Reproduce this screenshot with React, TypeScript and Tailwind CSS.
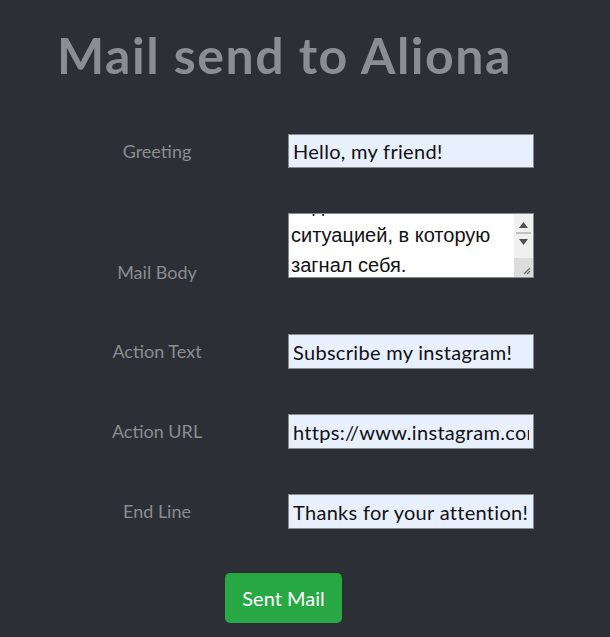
import React, { useEffect, useRef } from 'react';

const fields = [
  { label: 'Action Text', value: 'Subscribe my instagram!' },
  { label: 'Action URL', value: 'https://www.instagram.com/aliona' },
  { label: 'End Line', value: 'Thanks for your attention!' },
];

const font = { fontFamily: 'Lato, "Open Sans", sans-serif' };

const mailBody = 'Привет!\nВ данном письме хочу\nподелиться своей\nситуацией, в которую\nзагнал себя.';

const App: React.FC = () => {
  const bodyRef = useRef<HTMLTextAreaElement>(null);

  useEffect(() => {
    const el = bodyRef.current;
    if (el) el.scrollTop = el.scrollHeight - el.clientHeight - 5;
  }, []);

  return (
    <div className="min-h-[637px] w-full bg-[#2c2f35]" style={font}>
      <h1 className="pl-[57px] pt-[20px] text-[50px] font-bold leading-[70px] tracking-[1.5px] text-[#8b8d92]">
        Mail send to Aliona
      </h1>

      <div className="mt-[44px] flex flex-col">
        <div className="flex items-center">
          <label className="ml-[57px] w-[200px] text-center text-[18px] text-[#8a8d91]">Greeting</label>
          <input
            className="ml-[31px] h-[34px] w-[246px] border border-[#8a8a8a] bg-[#e8f0fe] px-[4px] text-[20px] tracking-[0.3px] text-[#111] outline-none"
            defaultValue="Hello, my friend!"
          />
        </div>

        <div className="mt-[45px] flex items-end">
          <label className="mb-[-8px] ml-[57px] w-[200px] text-center text-[18px] text-[#8a8d91]">Mail Body</label>
          <div className="ml-[31px] flex h-[65px] w-[246px] border border-[#8a8a8a] bg-white">
            <textarea
              ref={bodyRef}
              className="h-full flex-1 resize-none overflow-hidden bg-white px-[2px] py-[2px] text-[20px] leading-[30px] text-[#111] outline-none"
              style={{ fontFamily: '"Liberation Sans", Arial, sans-serif' }}
              defaultValue={mailBody}
            />
            <div className="flex w-[19px] flex-col bg-[#f0f0f0]">
              <div className="flex h-[44px] flex-col items-center pt-[8px]">
                <svg width="9" height="6" viewBox="0 0 9 6">
                  <path d="M4.5 0 L9 6 L0 6 Z" fill="#505050" />
                </svg>
                <div className="mt-[4px] h-[2px] w-[15px] bg-[#c1c1c1]" />
                <svg className="mt-[5px]" width="9" height="6" viewBox="0 0 9 6">
                  <path d="M0 0 L9 0 L4.5 6 Z" fill="#505050" />
                </svg>
              </div>
              <div className="relative flex-1 bg-[#dcdcdc]">
                <svg className="absolute bottom-[2px] right-[2px]" width="10" height="10" viewBox="0 0 10 10">
                  <path d="M9 3 L3 9 M9 6 L6 9" stroke="#6a6a6a" strokeWidth="1.2" />
                </svg>
              </div>
            </div>
          </div>
        </div>

        {fields.map((f, i) => (
          <div key={f.label} className={`flex items-center ${i === 0 ? 'mt-[56px]' : 'mt-[45px]'}`}>
            <label className="ml-[57px] w-[200px] text-center text-[18px] text-[#8a8d91]">{f.label}</label>
            <input
              className="ml-[31px] h-[35px] w-[246px] border border-[#8a8a8a] bg-[#e8f0fe] px-[4px] text-[20px] tracking-[0.3px] text-[#111] outline-none"
              defaultValue={f.value}
            />
          </div>
        ))}

        <div className="mt-[44px] flex">
          <button className="ml-[225px] h-[50px] w-[117px] rounded-[5px] bg-[#28a745] text-[20px] text-white">
            Sent Mail
          </button>
        </div>
      </div>
    </div>
  );
};

export default App;
